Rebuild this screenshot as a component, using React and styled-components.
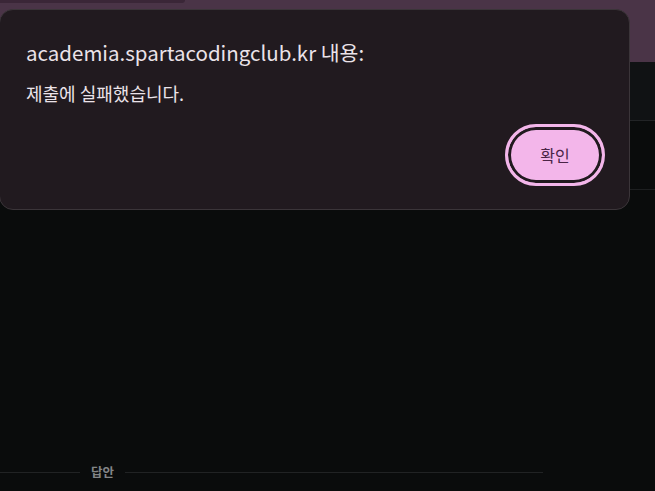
import React from 'react';
import styled, { createGlobalStyle } from 'styled-components';

const GlobalStyle = createGlobalStyle`
  html, body {
    margin: 0;
    padding: 0;
    background: #0a0c0c;
    font-family: "Noto Sans CJK KR", "Noto Sans", sans-serif;
  }
  #root { height: 491px; overflow: hidden; }
`;

const Page = styled.div`
  position: relative;
  width: 655px;
  height: 491px;
  overflow: hidden;
  display: flex;
  flex-direction: column;
  background: #0a0c0c;
`;

const TopBar = styled.div`
  height: 62px;
  background: #4a3447;
  flex-shrink: 0;
`;

const Tab = styled.div`
  width: 185px;
  height: 3px;
  background: #3a2637;
  border-bottom-right-radius: 8px;
`;

const Toolbar = styled.div`
  height: 58px;
  background: #101214;
  border-bottom: 1px solid #222426;
  flex-shrink: 0;
`;

const Section = styled.div`
  height: 68px;
  border-bottom: 1px solid #1d1f20;
  flex-shrink: 0;
`;

const Content = styled.div`
  flex: 1;
  display: flex;
  flex-direction: column;
  justify-content: flex-end;
  padding-bottom: 12px;
`;

const Divider = styled.div`
  display: flex;
  align-items: center;
  width: 543px;
  gap: 11px;
`;

const Line = styled.div`
  height: 1px;
  background: #212324;
  width: ${p => (p.$grow ? 'auto' : `${p.$w}px`)};
  flex: ${p => (p.$grow ? 1 : 'none')};
`;

const DividerLabel = styled.span`
  font-size: 12.5px;
  font-weight: 700;
  color: #838587;
  line-height: 14px;
`;

const Dialog = styled.div`
  position: absolute;
  left: -1px;
  top: 9px;
  width: 631px;
  height: 201px;
  box-sizing: border-box;
  background: #211a1f;
  border: 1px solid #3b3539;
  border-radius: 14px;
  padding: 28px 24px 23px 26px;
  display: flex;
  flex-direction: column;
`;

const Title = styled.div`
  font-size: 20.5px;
  color: #ebe3e9;
  line-height: 28px;
`;

const Message = styled.div`
  margin-top: 15px;
  font-size: 18px;
  color: #ebe3e9;
  line-height: 24px;
`;

const Actions = styled.div`
  margin-top: auto;
  display: flex;
  justify-content: flex-end;
`;

const OkButton = styled.button`
  width: 100px;
  height: 62px;
  box-sizing: border-box;
  border-radius: 31px;
  border: 3px solid #f3b6ea;
  box-shadow: inset 0 0 0 3px #211a1f;
  background: #f3b6ea;
  color: #4a2546;
  font-family: inherit;
  font-size: 16px;
  padding: 0;
  cursor: pointer;
`;

export default function App() {
  return (
    <>
      <GlobalStyle />
      <Page>
        <TopBar>
          <Tab />
        </TopBar>
        <Toolbar />
        <Section />
        <Content>
          <Divider>
            <Line $w={80} />
            <DividerLabel>답안</DividerLabel>
            <Line $grow />
          </Divider>
        </Content>
        <Dialog>
          <Title>academia.spartacodingclub.kr 내용:</Title>
          <Message>제출에 실패했습니다.</Message>
          <Actions>
            <OkButton>확인</OkButton>
          </Actions>
        </Dialog>
      </Page>
    </>
  );
}
